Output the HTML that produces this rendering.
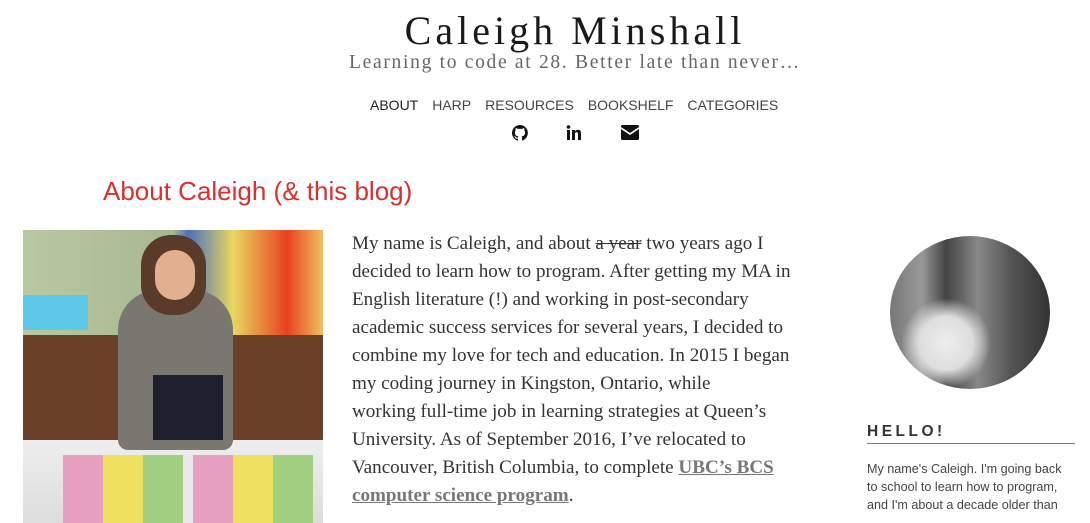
<!DOCTYPE html>
<html><head><meta charset="utf-8"><style>
*{margin:0;padding:0;box-sizing:border-box}
body{width:1090px;height:523px;overflow:hidden;background:#fff;position:relative;font-family:"Liberation Serif",serif}
.t{position:absolute;left:0;width:1150px;text-align:center;white-space:nowrap}
h1{position:absolute;top:7px;left:0;width:1150px;text-align:center;font-weight:normal;font-size:40px;letter-spacing:4px;color:#1a1a1a}
.sub{top:52px;font-size:19.5px;letter-spacing:1.7px;color:#666}
nav{position:absolute;top:97px;left:370px;font-family:"Liberation Sans",sans-serif;font-size:14px;color:#444;white-space:nowrap}
nav span{margin-right:14px}
.ic{position:absolute;top:125px}
h2{position:absolute;left:103px;top:176px;font-family:"Liberation Sans",sans-serif;font-weight:normal;font-size:26px;color:#d9302f}
.p{position:absolute;left:352px;top:230px;font-size:19.1px;line-height:28px;color:#333;white-space:nowrap}
.p a{color:#777;font-weight:bold;text-decoration:underline}
.photo{position:absolute;left:23px;top:230px;width:300px;height:293px;overflow:hidden;background:#7a5a40}
.circ{position:absolute;left:890px;top:236px;width:160px;height:153px;border-radius:50%;overflow:hidden;background:radial-gradient(circle at 35% 70%,#eee 0,#ddd 18%,transparent 30%),linear-gradient(90deg,#777 0,#999 20%,#444 35%,#888 55%,#555 75%,#333 100%)}
.hello{position:absolute;left:867px;top:423px;width:208px;font-family:"Liberation Sans",sans-serif;font-weight:bold;font-size:15.5px;letter-spacing:3.5px;color:#333;border-bottom:1px solid #777;padding-bottom:2px}
.side{position:absolute;left:867px;top:460px;font-family:"Liberation Sans",sans-serif;font-size:12.6px;line-height:18px;color:#444;white-space:nowrap}
</style></head><body>
<h1>Caleigh Minshall</h1>
<div class="t sub">Learning to code at 28. Better late than never…</div>
<nav><span style="color:#222">ABOUT</span><span>HARP</span><span>RESOURCES</span><span>BOOKSHELF</span><span>CATEGORIES</span></nav>
<svg class="ic" style="left:512px" width="16" height="16" viewBox="0 0 16 16"><path fill="#111" d="M8 0a8 8 0 0 0-2.5 15.6c.4 0 .5-.2.5-.4v-1.5C3.8 14.2 3.3 12.7 3.3 12.7c-.4-.9-.9-1.2-.9-1.2-.7-.5.1-.5.1-.5.8.1 1.2.8 1.2.8.7 1.2 1.9.9 2.3.7.1-.5.3-.9.5-1.1-1.8-.2-3.6-.9-3.6-4 0-.9.3-1.6.8-2.1-.1-.2-.4-1 .1-2.1 0 0 .7-.2 2.2.8a7.5 7.5 0 0 1 4 0c1.5-1 2.2-.8 2.2-.8.4 1.1.2 1.9.1 2.1.5.6.8 1.3.8 2.1 0 3.1-1.9 3.8-3.6 4 .3.3.5.8.5 1.5v2.2c0 .2.1.5.6.4A8 8 0 0 0 8 0z"/></svg>
<svg class="ic" style="left:566px" width="16" height="16" viewBox="0 0 16 16"><rect x="1" y="5" width="3" height="10" fill="#111"/><circle cx="2.5" cy="2" r="1.8" fill="#111"/><path fill="#111" d="M6 5h3v1.4c.5-.9 1.6-1.6 3-1.6 2.5 0 3 1.6 3 3.8V15h-3V9.2c0-1-.2-2-1.5-2S9 8.2 9 9.2V15H6z"/></svg>
<svg class="ic" style="left:621px" width="18" height="15" viewBox="0 0 18 15"><path fill="#111" d="M0 1.5Q0 0 1.5 0h15Q18 0 18 1.5v.5L9 8 0 2z M0 4l9 6 9-6v9.5Q18 15 16.5 15h-15Q0 15 0 13.5z"/></svg>
<h2>About Caleigh (&amp; this blog)</h2>
<div class="photo">
<div style="position:absolute;left:0;top:0;width:300px;height:105px;background:linear-gradient(90deg,#b8c8a0 0,#a8b890 50%,#4a70c0 55%,#e8d860 70%,#e84020 88%,#f0c060 100%)"></div>
<div style="position:absolute;left:0;top:65px;width:65px;height:35px;background:#5ec8e8"></div>
<div style="position:absolute;left:0;top:105px;width:300px;height:110px;background:#6a4028"></div>
<div style="position:absolute;left:0;top:210px;width:300px;height:83px;background:linear-gradient(180deg,#eee,#ddd)"></div>
<div style="position:absolute;left:40px;top:225px;width:250px;height:68px;background:repeating-linear-gradient(90deg,#e8a0c0 0 40px,#f0e060 40px 80px,#a0d080 80px 120px,#e8e8e8 120px 130px)"></div>
<div style="position:absolute;left:95px;top:60px;width:115px;height:160px;border-radius:40px 40px 10px 10px;background:#7a7770"></div>
<div style="position:absolute;left:118px;top:5px;width:65px;height:80px;border-radius:30px;background:#5a3a28"></div>
<div style="position:absolute;left:132px;top:20px;width:40px;height:50px;border-radius:20px;background:#e0b090"></div>
<div style="position:absolute;left:130px;top:145px;width:70px;height:65px;background:#1e2030"></div>
</div>
<div class="p">My name is Caleigh, and about <s>a year</s> two years ago I<br>decided to learn how to program. After getting my MA in<br>English literature (!) and working in post-secondary<br>academic success services for several years, I decided to<br>combine my love for tech and education. In 2015 I began<br>my coding journey in Kingston, Ontario, while<br>working full-time job in learning strategies at Queen’s<br>University. As of September 2016, I’ve relocated to<br>Vancouver, British Columbia, to complete <a>UBC’s BCS<br>computer science program</a>.</div>
<div class="circ"></div>
<div class="hello">HELLO!</div>
<div class="side">My name's Caleigh. I'm going back<br>to school to learn how to program,<br>and I'm about a decade older than</div>
</body></html>
